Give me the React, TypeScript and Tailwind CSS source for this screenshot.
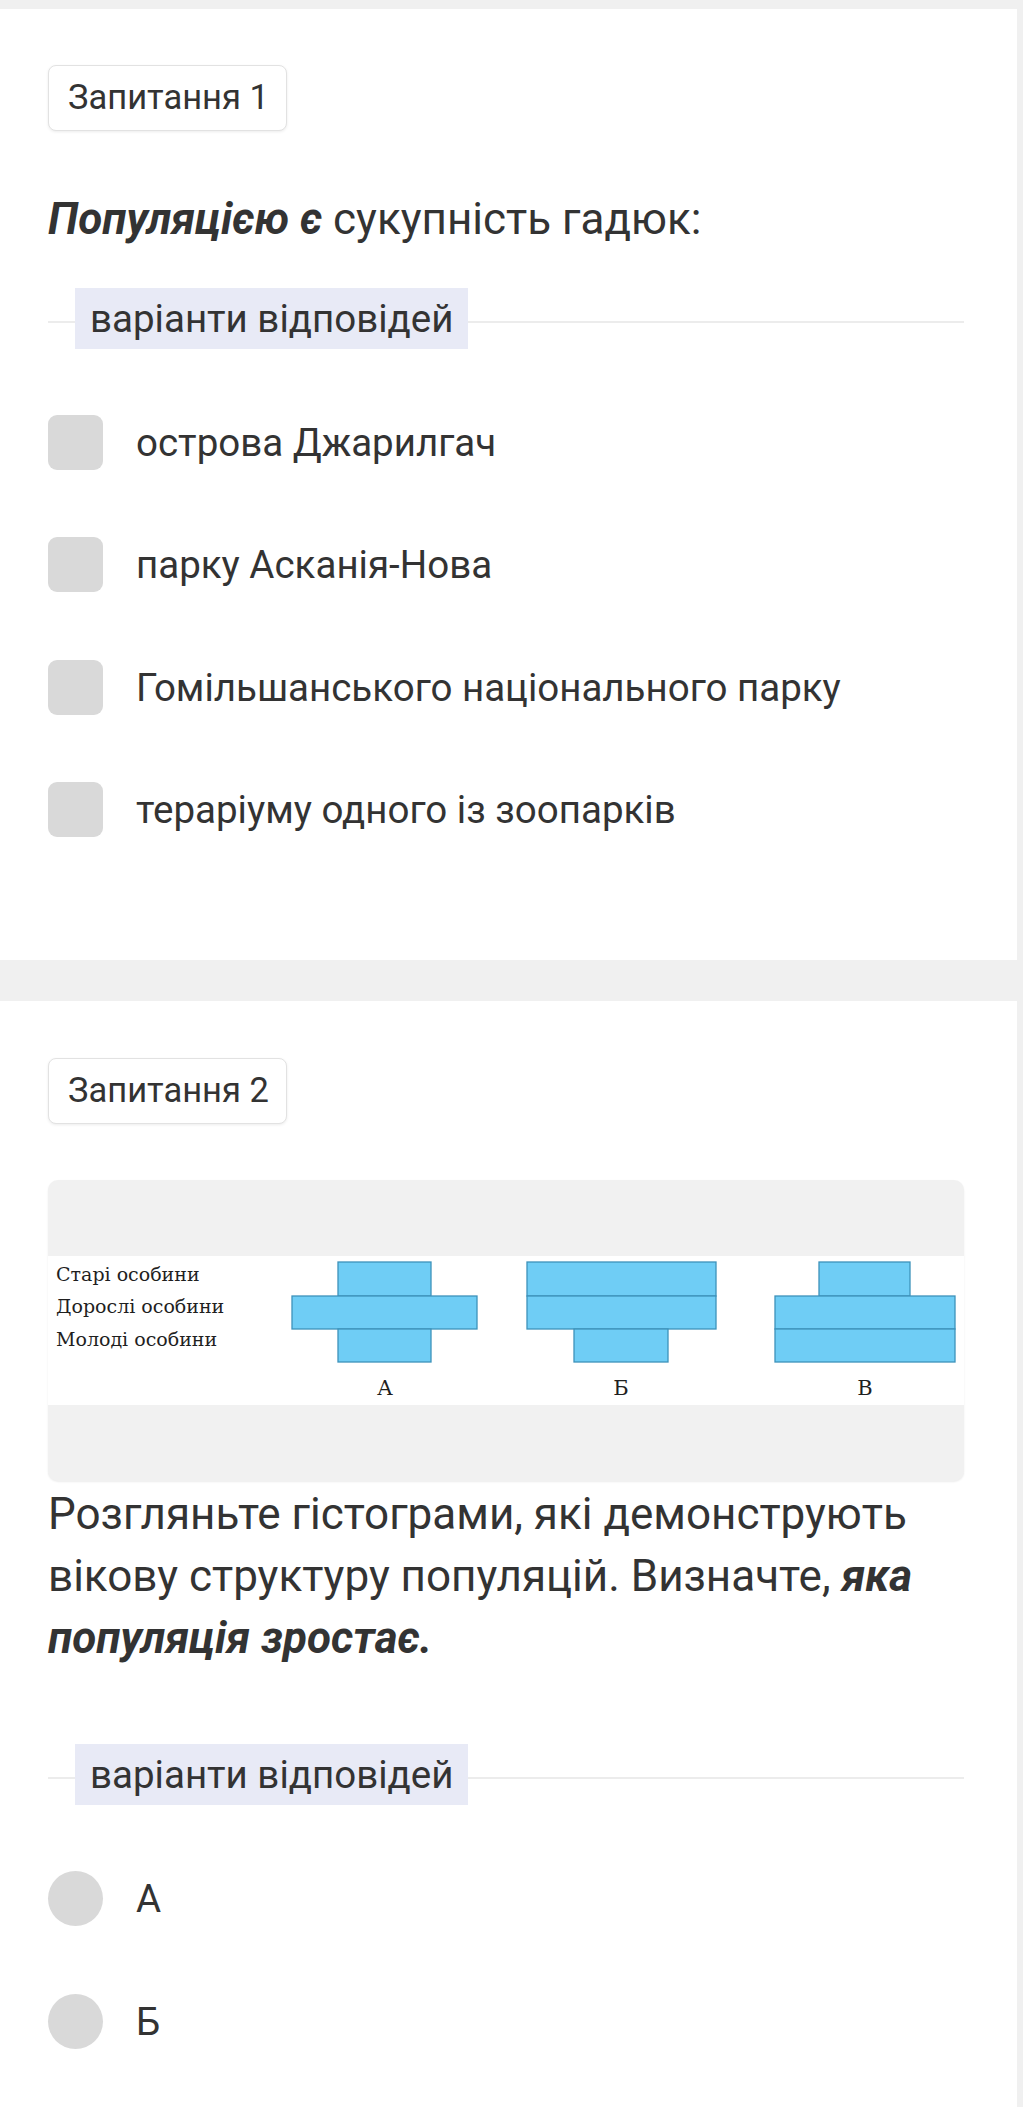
import React from 'react';

const options = [
  'острова Джарилгач',
  'парку Асканія-Нова',
  'Гомільшанського національного парку',
  'тераріуму одного із зоопарків',
];

const rowLabels = [
  { text: 'Старі особини', y: 25 },
  { text: 'Дорослі особини', y: 57 },
  { text: 'Молоді особини', y: 90 },
];

// bars: x/width per age row (top: old, middle: adult, bottom: young)
const charts = [
  { label: 'А', cx: 337, bars: [{ x: 290, w: 93 }, { x: 244, w: 185 }, { x: 290, w: 93 }] },
  { label: 'Б', cx: 573, bars: [{ x: 479, w: 189 }, { x: 479, w: 189 }, { x: 526, w: 94 }] },
  { label: 'В', cx: 817, bars: [{ x: 771, w: 91 }, { x: 727, w: 180 }, { x: 727, w: 180 }] },
];

const barRows = [
  { y: 6, h: 34 },
  { y: 40, h: 33 },
  { y: 73, h: 33 },
];

function Badge({ n }: { n: number }) {
  return (
    <div className="flex h-[66px] w-[239px] items-center rounded-[8px] border border-[#e2e2e2] bg-white pl-[19px] text-[34.5px] shadow-[0_1px_3px_rgba(0,0,0,0.08)]">
      Запитання {n}
    </div>
  );
}

function Legend({ className = '' }: { className?: string }) {
  return (
    <div className={`flex items-start ${className}`}>
      <div className="mt-[33px] h-[2px] w-[27px] bg-[#ececec]" />
      <span className="bg-[#e8eaf6] px-[15px] text-[38.5px] leading-[61px]">варіанти відповідей</span>
      <div className="mt-[33px] h-[2px] flex-1 bg-[#ececec]" />
    </div>
  );
}

function AgeChart() {
  return (
    <svg className="block h-[149px] w-full bg-white" viewBox="0 0 916 149" preserveAspectRatio="none">
      {rowLabels.map((r) => (
        <text key={r.text} x={8} y={r.y} fontFamily="'DejaVu Serif', serif" fontSize={19} fill="#1f1f1f">
          {r.text}
        </text>
      ))}
      {charts.map((c) => (
        <g key={c.label}>
          {c.bars.map((b, i) => (
            <rect
              key={i}
              x={b.x}
              y={barRows[i].y}
              width={b.w}
              height={barRows[i].h}
              fill="#6fcdf5"
              stroke="#3d92ba"
              strokeWidth={1.3}
            />
          ))}
          <text x={c.cx} y={139} textAnchor="middle" fontFamily="'DejaVu Serif', serif" fontSize={21} fill="#1f1f1f">
            {c.label}
          </text>
        </g>
      ))}
    </svg>
  );
}

export default function App() {
  return (
    <div className="min-h-screen bg-[#f0f0f0] pr-[6px] pt-[9px] font-['Roboto',sans-serif] text-[#333]">
      <section className="bg-white pb-[123px] pl-[48px] pr-[53px] pt-[56px]">
        <Badge n={1} />
        <p className="mt-[58px] text-[44px] leading-[60px]">
          <b className="italic">Популяцією є</b> сукупність гадюк:
        </p>
        <Legend className="mt-[39px]" />
        <ul className="mt-[66px] flex flex-col gap-[67.4px]">
          {options.map((o) => (
            <li key={o} className="flex items-center gap-[33px]">
              <span className="h-[55px] w-[55px] shrink-0 rounded-[9px] bg-[#d9d9d9]" />
              <span className="text-[38.5px] leading-[55px]">{o}</span>
            </li>
          ))}
        </ul>
      </section>

      <section className="mt-[41px] bg-white pb-[123px] pl-[48px] pr-[53px] pt-[57px]">
        <Badge n={2} />
        <div className="mt-[56px] flex h-[301px] items-center rounded-[10px] bg-[#f1f1f1] shadow-[0_1px_2px_rgba(0,0,0,0.08)]">
          <AgeChart />
        </div>
        <p className="mt-[2px] text-[44px] leading-[62px]">
          Розгляньте гістограми, які демонструють вікову структуру популяцій. Визначте,{' '}
          <b className="italic">яка популяція зростає.</b>
        </p>
        <Legend className="mt-[75px]" />
        <ul className="mt-[66px] flex flex-col gap-[67.4px]">
          {['А', 'Б'].map((o) => (
            <li key={o} className="flex items-center gap-[33px]">
              <span className="h-[55px] w-[55px] shrink-0 rounded-full bg-[#d9d9d9]" />
              <span className="text-[38.5px] leading-[55px]">{o}</span>
            </li>
          ))}
        </ul>
      </section>
    </div>
  );
}
